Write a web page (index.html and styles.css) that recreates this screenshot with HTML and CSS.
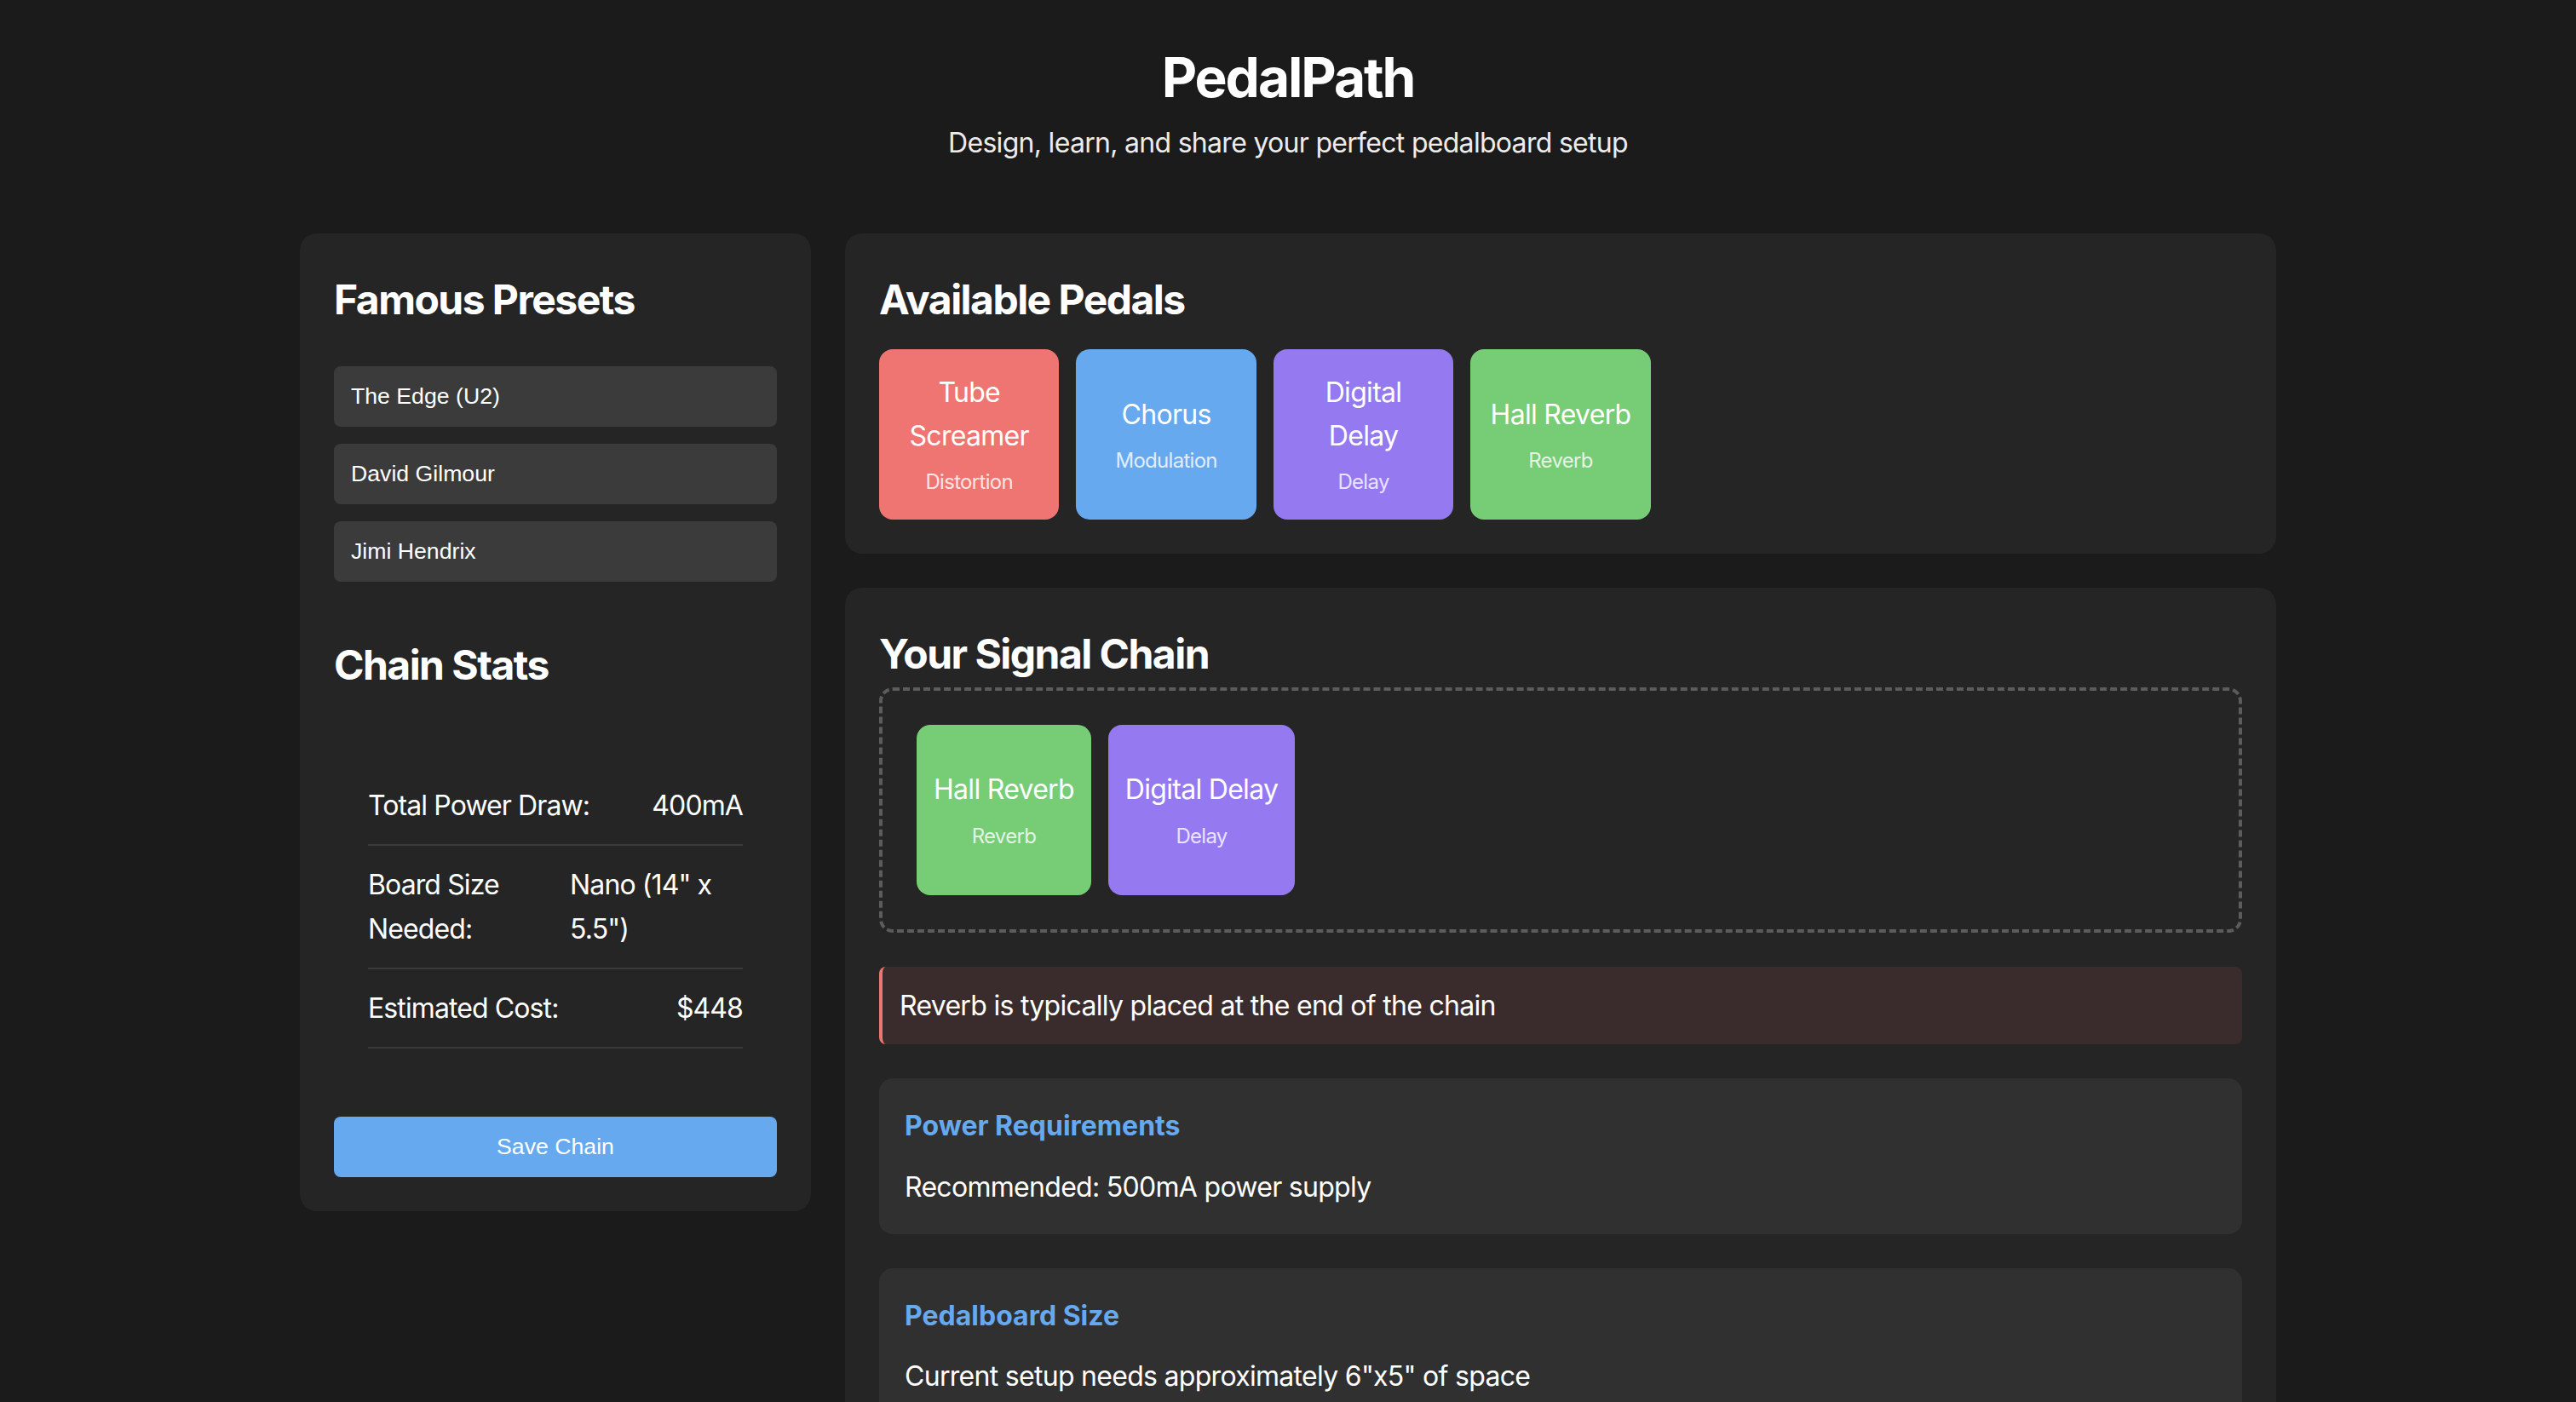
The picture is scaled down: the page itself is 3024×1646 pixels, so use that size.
FILE: index.html
```html
<!DOCTYPE html>
<html lang="en">
<head>
<meta charset="utf-8">
<title>PedalPath</title>
<link rel="stylesheet" href="styles.css">
</head>
<body>
<div class="container">
  <header class="header">
    <h1>PedalPath</h1>
    <p class="subtitle">Design, learn, and share your perfect pedalboard setup</p>
  </header>
  <div class="layout">
    <aside class="panel sidebar">
      <h2>Famous Presets</h2>
      <div class="preset-list">
        <button class="preset-btn">The Edge (U2)</button>
        <button class="preset-btn">David Gilmour</button>
        <button class="preset-btn">Jimi Hendrix</button>
      </div>
      <h2>Chain Stats</h2>
      <div class="stats">
        <div class="stat-row"><span class="stat-label">Total Power Draw:</span><span class="stat-value">400mA</span></div>
        <div class="stat-row"><span class="stat-label">Board Size Needed:</span><span class="stat-value">Nano (14" x 5.5")</span></div>
        <div class="stat-row"><span class="stat-label">Estimated Cost:</span><span class="stat-value">$448</span></div>
      </div>
      <button class="save-btn">Save Chain</button>
    </aside>
    <main class="main">
      <section class="panel">
        <h2 class="pedals-title">Available Pedals</h2>
        <div class="pedal-grid">
          <div class="pedal pedal-distortion"><div class="pedal-name">Tube Screamer</div><div class="pedal-type">Distortion</div></div>
          <div class="pedal pedal-modulation"><div class="pedal-name">Chorus</div><div class="pedal-type">Modulation</div></div>
          <div class="pedal pedal-delay"><div class="pedal-name">Digital Delay</div><div class="pedal-type">Delay</div></div>
          <div class="pedal pedal-reverb"><div class="pedal-name">Hall Reverb</div><div class="pedal-type">Reverb</div></div>
        </div>
      </section>
      <section class="panel">
        <h2 class="chain-title">Your Signal Chain</h2>
        <div class="chain-zone">
          <div class="pedal chain-pedal pedal-reverb"><div class="pedal-name">Hall Reverb</div><div class="pedal-type">Reverb</div></div>
          <div class="pedal chain-pedal pedal-delay"><div class="pedal-name">Digital Delay</div><div class="pedal-type">Delay</div></div>
        </div>
        <div class="warning">Reverb is typically placed at the end of the chain</div>
        <div class="info-card">
          <h3>Power Requirements</h3>
          <p>Recommended: 500mA power supply</p>
        </div>
        <div class="info-card">
          <h3>Pedalboard Size</h3>
          <p>Current setup needs approximately 6"x5" of space</p>
        </div>
      </section>
    </main>
  </div>
</div>
</body>
</html>
```

FILE: styles.css
```css
*, *::before, *::after {
  box-sizing: border-box;
}

html, body {
  margin: 0;
  padding: 0;
}

body {
  background: #1b1b1b;
  color: #ffffff;
  font-family: Inter, "Noto Sans", sans-serif;
  font-size: 32px;
  line-height: 1.6;
  letter-spacing: -0.022em;
}

.container {
  max-width: 2400px;
  margin: 0 auto;
  padding: 40px;
}

.header {
  text-align: center;
  margin-bottom: 80px;
}

.header h1 {
  font-size: 64px;
  font-weight: 700;
  letter-spacing: -0.032em;
  margin: 0;
}

.subtitle {
  margin: 0;
  font-size: 32px;
  color: #ececec;
}

.layout {
  display: grid;
  grid-template-columns: 600px 1fr;
  gap: 40px;
  align-items: start;
}

.panel {
  background: #252525;
  border-radius: 20px;
  padding: 40px;
}

.panel h2 {
  font-size: 48px;
  font-weight: 700;
  letter-spacing: -0.032em;
  margin: 0 0 40px;
}

.preset-list {
  display: flex;
  flex-direction: column;
  gap: 20px;
  margin-bottom: 60px;
}

.preset-btn,
.save-btn {
  display: block;
  width: 100%;
  border: none;
  border-radius: 8px;
  padding: 20px;
  font-family: "Liberation Sans", Arial, sans-serif;
  font-size: 26.67px;
  line-height: normal;
  letter-spacing: normal;
  color: #ffffff;
  cursor: pointer;
}

.preset-btn {
  background: #3b3b3b;
  text-align: left;
}

.stats {
  padding: 40px;
}

.stat-row {
  display: flex;
  justify-content: space-between;
  padding: 20px 0;
  border-bottom: 2px solid #3a3a3a;
  letter-spacing: -0.028em;
}

.save-btn {
  margin-top: 40px;
  background: #66a9ef;
  text-align: center;
}

.main {
  display: flex;
  flex-direction: column;
  gap: 40px;
}

.panel .pedals-title {
  margin-bottom: 20px;
}

.panel .chain-title {
  margin-bottom: 0;
}

.pedal-grid {
  display: grid;
  grid-template-columns: repeat(auto-fill, minmax(200px, 1fr));
  gap: 20px;
}

.pedal {
  min-height: 200px;
  padding: 20px;
  border-radius: 16px;
  display: flex;
  flex-direction: column;
  align-items: center;
  justify-content: center;
  text-align: center;
  color: #ffffff;
}

.pedal-name {
  font-size: 32px;
}

.pedal-type {
  font-size: 24px;
  margin-top: 10px;
  opacity: 0.8;
}

.pedal-distortion { background: #ef7572; }
.pedal-modulation { background: #66a9ef; }
.pedal-delay { background: #9579f1; }
.pedal-reverb { background: #77cc76; }

.chain-zone {
  display: flex;
  gap: 20px;
  padding: 40px;
  border: 4px dashed #5c5c5c;
  border-radius: 16px;
}

.warning {
  margin-top: 40px;
  padding: 20px;
  background: #3a2c2c;
  border-left: 4px solid #ef7572;
  border-radius: 8px;
}

.info-card {
  margin-top: 40px;
  padding: 30px;
  background: #303030;
  border-radius: 16px;
}

.info-card h3 {
  margin: 0 0 20px;
  font-size: 32px;
  font-weight: 700;
  letter-spacing: 0;
  color: #66a9ef;
}

.info-card p {
  margin: 0;
}
```
